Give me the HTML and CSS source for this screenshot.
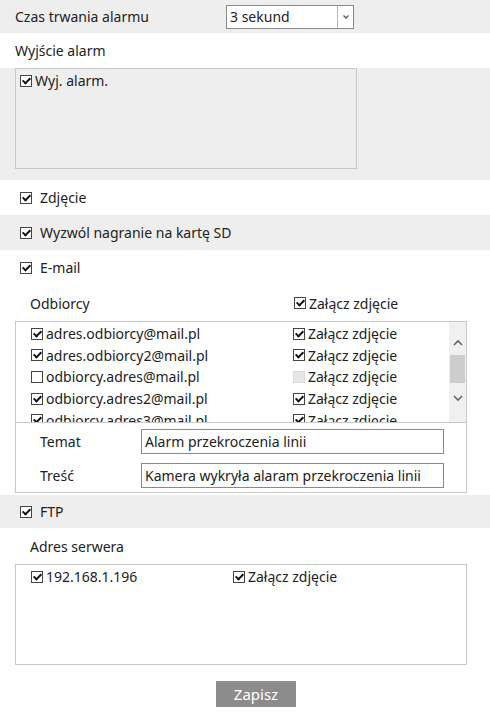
FILE: index.html
```html
<!DOCTYPE html>
<html lang="pl">
<head>
    <meta charset="UTF-8">
    <meta name="viewport" content="width=device-width, initial-scale=1.0">
    <title>Alarm</title>
    <link rel="stylesheet" href="styles.css">
</head>
<body>

    <div class="row grey first">
        <span class="label">Czas trwania alarmu</span>
        <div class="select">
            <span class="select-value">3 sekund</span>
            <span class="select-btn">
                <svg width="8" height="6" viewBox="0 0 8 6"><path d="M1.5 1.5 L4 4 L6.5 1.5" fill="none" stroke="#555" stroke-width="1.3"/></svg>
            </span>
        </div>
    </div>

    <div class="row">
        <span class="label">Wyjście alarm</span>
    </div>

    <div class="grey out-section">
        <div class="out-box">
            <label class="item"><span class="cb on"></span>Wyj. alarm.</label>
        </div>
    </div>

    <div class="row opt">
        <label class="item"><span class="cb on"></span><span class="gap">Zdjęcie</span></label>
    </div>
    <div class="row opt grey">
        <label class="item"><span class="cb on"></span><span class="gap">Wyzwól nagranie na kartę SD</span></label>
    </div>
    <div class="row opt">
        <label class="item"><span class="cb on"></span><span class="gap">E-mail</span></label>
    </div>

    <div class="sub-head">
        <span class="col-a">Odbiorcy</span>
        <label class="item col-b head-b"><span class="cb on"></span>Załącz zdjęcie</label>
    </div>

    <div class="mail-box">
        <div class="mail-list">
            <div class="mail-rows">
                <div class="mail-row">
                    <label class="item col-a"><span class="cb on"></span>adres.odbiorcy@mail.pl</label>
                    <label class="item col-b"><span class="cb on"></span>Załącz zdjęcie</label>
                </div>
                <div class="mail-row">
                    <label class="item col-a"><span class="cb on"></span>adres.odbiorcy2@mail.pl</label>
                    <label class="item col-b"><span class="cb on"></span>Załącz zdjęcie</label>
                </div>
                <div class="mail-row">
                    <label class="item col-a"><span class="cb"></span>odbiorcy.adres@mail.pl</label>
                    <label class="item col-b"><span class="cb off"></span>Załącz zdjęcie</label>
                </div>
                <div class="mail-row">
                    <label class="item col-a"><span class="cb on"></span>odbiorcy.adres2@mail.pl</label>
                    <label class="item col-b"><span class="cb on"></span>Załącz zdjęcie</label>
                </div>
                <div class="mail-row">
                    <label class="item col-a"><span class="cb on"></span>odbiorcy.adres3@mail.pl</label>
                    <label class="item col-b"><span class="cb on"></span>Załącz zdjęcie</label>
                </div>
            </div>
            <div class="scrollbar">
                <svg class="arrow up" width="12" height="8" viewBox="0 0 12 8"><path d="M2 6 L6 2 L10 6" fill="none" stroke="#666" stroke-width="1.6"/></svg>
                <div class="thumb"></div>
                <svg class="arrow down" width="12" height="8" viewBox="0 0 12 8"><path d="M2 2 L6 6 L10 2" fill="none" stroke="#666" stroke-width="1.6"/></svg>
            </div>
        </div>
        <div class="mail-fields">
            <div class="field">
                <span class="field-label">Temat</span>
                <div class="input">Alarm przekroczenia linii</div>
            </div>
            <div class="field">
                <span class="field-label">Treść</span>
                <div class="input">Kamera wykryła alaram przekroczenia linii</div>
            </div>
        </div>
    </div>

    <div class="row opt grey ftp">
        <label class="item"><span class="cb on"></span><span class="gap">FTP</span></label>
    </div>

    <div class="sub-head">
        <span class="col-a">Adres serwera</span>
    </div>

    <div class="ftp-box">
        <div class="mail-row">
            <label class="item col-a"><span class="cb on"></span>192.168.1.196</label>
            <label class="item col-c"><span class="cb on"></span>Załącz zdjęcie</label>
        </div>
    </div>

    <div class="actions">
        <button class="save">Zapisz</button>
    </div>

</body>
</html>
```

FILE: styles.css
```css
body {
    margin: 0;
    font-family: "Noto Sans", Arial, sans-serif;
    font-size: 14px;
    color: #222;
    background-color: #ffffff;
}
.grey {
    background-color: #eeeeee;
}
.row {
    height: 35px;
    display: flex;
    align-items: center;
    padding-left: 15px;
}
.row.first {
    height: 33px;
}
.label {
    width: 211px;
}
.select {
    width: 126px;
    height: 22px;
    border: 1px solid #8a8a8a;
    background-color: #ffffff;
    display: flex;
    align-items: center;
}
.select-value {
    flex: 1;
    padding-left: 3px;
}
.select-btn {
    width: 15px;
    height: 100%;
    border-left: 1px solid #b5b5b5;
    display: flex;
    align-items: center;
    justify-content: center;
}
.out-section {
    padding: 0 133px 11px 15px;
}
.out-box {
    height: 95px;
    border: 1px solid #c8c8c8;
    padding: 2px 4px;
}
.item {
    display: inline-flex;
    align-items: center;
    white-space: nowrap;
}
.cb {
    position: relative;
    width: 10px;
    height: 10px;
    border: 1px solid #444;
    background-color: #ffffff;
    margin-right: 3px;
    flex-shrink: 0;
}
.cb.on::after {
    content: "";
    position: absolute;
    left: 3px;
    top: 0px;
    width: 3px;
    height: 6px;
    border-right: 2px solid #111;
    border-bottom: 2px solid #111;
    transform: rotate(45deg);
}
.cb.off {
    border-color: #dcdcdc;
    background-color: #e6e6e6;
}
.opt {
    padding-left: 20px;
}
.gap {
    margin-left: 5px;
}
.ftp {
    height: 33px;
}
.sub-head {
    height: 36px;
    display: flex;
    align-items: center;
    padding-left: 30px;
}
.sub-head .col-a {
    width: 264px;
}
.mail-box {
    margin: 0 23px 2px 15px;
    border: 1px solid #c8c8c8;
}
.mail-list {
    height: 100px;
    display: flex;
    border-bottom: 1px solid #c8c8c8;
}
.mail-rows {
    flex: 1;
    overflow: hidden;
    padding-top: 1px;
}
.mail-row {
    height: 21.6px;
    display: flex;
    align-items: center;
    padding-left: 15px;
}
.mail-row .col-a {
    width: 262px;
}
.scrollbar {
    width: 17px;
    background-color: #f0f0f0;
    display: flex;
    flex-direction: column;
    align-items: center;
}
.arrow.up {
    margin: 17px 0 8px;
}
.arrow.down {
    margin-top: 11px;
}
.thumb {
    width: 15px;
    height: 28px;
    background-color: #cdcdcd;
}
.mail-fields {
    padding-top: 1px;
}
.field {
    height: 34px;
    display: flex;
    align-items: center;
    padding-left: 24px;
}
.field-label {
    width: 101px;
}
.input {
    width: 298px;
    height: 23px;
    line-height: 23px;
    border: 1px solid #8a8a8a;
    padding-left: 3px;
    background-color: #ffffff;
}
.ftp-box {
    margin: 0 23px 0 15px;
    height: 98px;
    border: 1px solid #c8c8c8;
    padding-top: 1px;
}
.ftp-box .col-a {
    width: 202px;
}
.actions {
    display: flex;
    justify-content: center;
    padding-top: 16px;
    padding-left: 22px;
}
.save {
    width: 80px;
    height: 26px;
    border: none;
    background-color: #8c8c8c;
    color: #ffffff;
    font-family: "Noto Sans", Arial, sans-serif;
    font-size: 15px;
}
```
